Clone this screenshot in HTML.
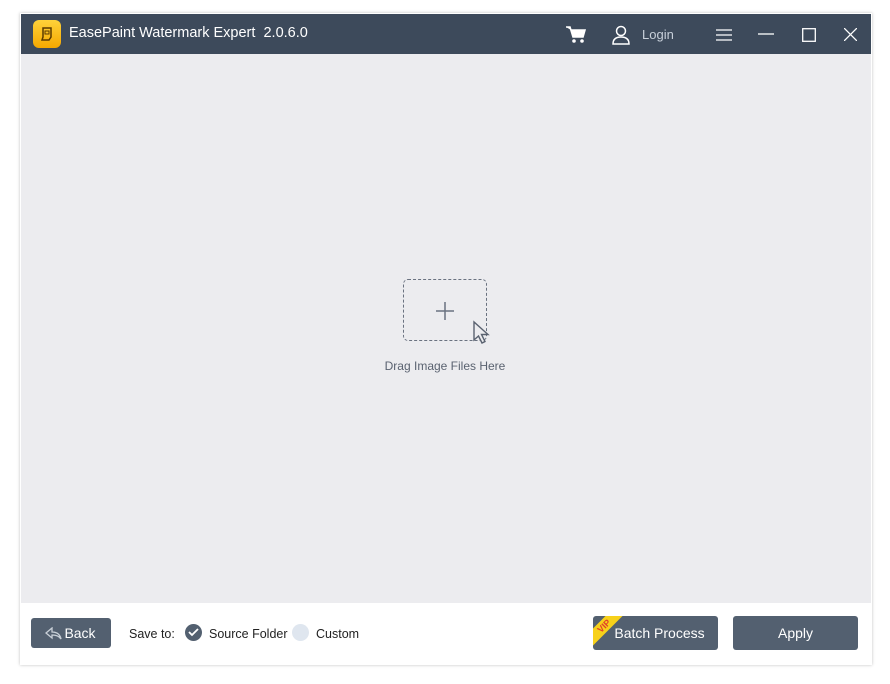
<!DOCTYPE html><html><head><style>
body{margin:0;width:890px;height:684px;background:#fff;position:relative;font-family:"Liberation Sans",sans-serif;overflow:hidden}
.win{position:absolute;left:20px;top:13px;width:852px;height:652px;box-shadow:0 0 3px rgba(0,0,0,.25);background:#fff}
.tb{position:absolute;left:1px;top:1px;width:850px;height:40px;background:#3d4a5b;color:#fff}
.body{position:absolute;left:1px;top:41px;width:850px;height:549px;background:#ececef}
.ft{position:absolute;left:1px;top:590px;width:850px;height:61px;background:#fff}
.btn{position:absolute;background:#536070;color:#fff;border-radius:3px;font-size:14px;text-align:center}
.t{position:absolute;font-size:12.5px;color:#222;white-space:nowrap}
</style></head><body>
<div class="win">
<div class="tb">
 <div style="position:absolute;left:12px;top:6px;width:28px;height:28px;border-radius:6px;background:linear-gradient(#ffd23a,#f5a800)"></div>
 <svg style="position:absolute;left:18px;top:12px" width="16" height="16" viewBox="0 0 16 16"><path d="M4 2h8v9l-2 3H3l1-3z" fill="none" stroke="#5a3a00" stroke-width="1.5"/><rect x="6" y="5" width="4" height="3" fill="none" stroke="#5a3a00"/></svg>
 <div style="position:absolute;left:48px;top:11px;font-size:14.5px;white-space:nowrap">EasePaint Watermark Expert&nbsp; 2.0.6.0</div>
 <svg style="position:absolute;left:545px;top:12px" width="20" height="18" viewBox="0 0 20 18"><path d="M0 1h4l3 10h10l2-7H5" fill="#fff" stroke="#fff" stroke-width="1.6"/><circle cx="8" cy="15" r="1.8" fill="#fff"/><circle cx="16" cy="15" r="1.8" fill="#fff"/></svg>
 <svg style="position:absolute;left:590px;top:11px" width="20" height="20" viewBox="0 0 20 20"><circle cx="10" cy="6" r="4.5" fill="none" stroke="#fff" stroke-width="1.5"/><path d="M2 19c0-5 3-7 8-7s8 2 8 7z" fill="none" stroke="#fff" stroke-width="1.5"/></svg>
 <div style="position:absolute;left:621px;top:13px;font-size:13px;color:#c8d0da">Login</div>
 <svg style="position:absolute;left:695px;top:15px" width="16" height="12"><path d="M0 1h16M0 6h16M0 11h16" stroke="#fff" stroke-width="1.3"/></svg>
 <svg style="position:absolute;left:737px;top:19px" width="16" height="2"><path d="M0 1h16" stroke="#fff" stroke-width="1.3"/></svg>
 <svg style="position:absolute;left:781px;top:14px" width="14" height="14"><rect x=".7" y=".7" width="12.6" height="12.6" fill="none" stroke="#fff" stroke-width="1.3"/></svg>
 <svg style="position:absolute;left:823px;top:14px" width="13" height="13"><path d="M0 0L13 13M13 0L0 13" stroke="#fff" stroke-width="1.3"/></svg>
</div>
<div class="body">
 <div style="position:absolute;left:382px;top:225px;width:82px;height:60px;border:1.3px dashed #6a7280;border-radius:5px"></div>
 <svg style="position:absolute;left:414px;top:247px" width="20" height="20"><path d="M10 1v18M1 10h18" stroke="#6a7280" stroke-width="1.5"/></svg>
 <svg style="position:absolute;left:451px;top:266px" width="20" height="26" viewBox="0 0 20 26"><path d="M2 2v18l4.5-4 3.5 7 3-1.5-3.5-7H16z" fill="#ececef" stroke="#5a6270" stroke-width="1.4"/></svg>
 <div style="position:absolute;left:344px;top:305px;width:160px;text-align:center;font-size:12px;color:#5a6270;white-space:nowrap">Drag Image Files Here</div>
</div>
<div class="ft">
 <div class="btn" style="left:10px;top:15px;width:80px;height:30px;line-height:30px"><span style="padding-left:18px">Back</span></div>
 <svg style="position:absolute;left:24px;top:24px" width="18" height="13" viewBox="0 0 18 13"><path d="M7 1L1 6l6 5V8c4 0 7 1 9 4-1-5-4-7-9-7z" fill="none" stroke="#c9d0d8" stroke-width="1.3"/></svg>
 <div class="t" style="left:108px;top:24px">Save to:</div>
 <div style="position:absolute;left:164px;top:21px;width:17px;height:17px;border-radius:50%;background:#536070"></div>
 <svg style="position:absolute;left:167px;top:24px" width="11" height="11"><path d="M1 5l3 3 6-6" fill="none" stroke="#fff" stroke-width="1.8"/></svg>
 <div class="t" style="left:188px;top:24px">Source Folder</div>
 <div style="position:absolute;left:271px;top:21px;width:17px;height:17px;border-radius:50%;background:#dfe6ef"></div>
 <div class="t" style="left:295px;top:24px">Custom</div>
 <div class="btn" style="left:572px;top:13px;width:125px;height:34px;line-height:34px;overflow:hidden"><span style="padding-left:8px">Batch Process</span>
  <div style="position:absolute;left:-17px;top:4px;width:56px;height:12px;background:#f7d11a;transform:rotate(-45deg);font-size:9px;line-height:12px;color:#e0432a;font-weight:bold">VIP</div></div>
 <div class="btn" style="left:712px;top:13px;width:125px;height:34px;line-height:34px">Apply</div>
</div>
</div>
</body></html>
